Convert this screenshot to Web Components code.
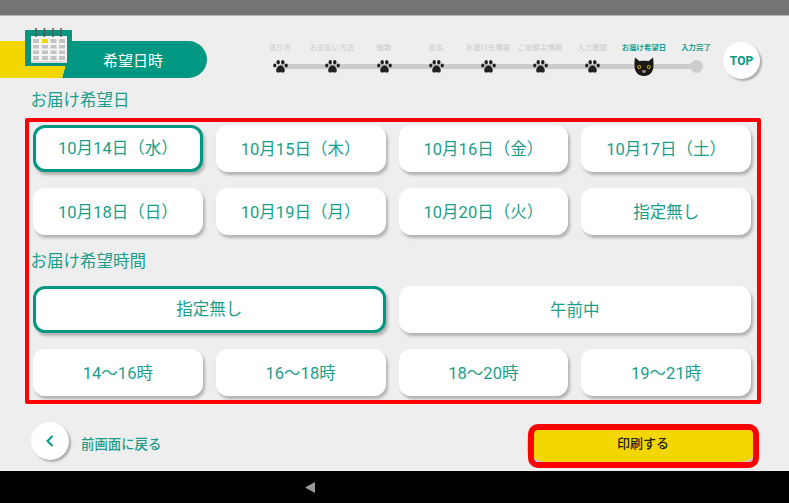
<!DOCTYPE html>
<html lang="ja">
<head>
<meta charset="utf-8">
<title>希望日時</title>
<style>
html, body { margin: 0; padding: 0; }
body {
	width: 789px;
	height: 503px;
	overflow: hidden;
	background: #eeeeee;
	font-family: Roboto, "Noto Sans CJK JP", sans-serif;
	color: #1a9e8b;
}
</style>
</head>
<body>
<app-screen>
	<page-head slot="head">
		<page-title>希望日時</page-title>
		<step-bar>
			<step-item pos="first">送り方</step-item>
			<step-item>お支払い方法</step-item>
			<step-item>個数</step-item>
			<step-item>品名</step-item>
			<step-item>お届け先情報</step-item>
			<step-item>ご依頼主情報</step-item>
			<step-item>入力確認</step-item>
			<step-item mark="cat">お届け希望日</step-item>
			<step-item mark="dot" pos="last">入力完了</step-item>
		</step-bar>
		<top-button>TOP</top-button>
	</page-head>
	<section-label slot="date-label">お届け希望日</section-label>
	<choice-frame slot="frame">
		<choice-grid>
			<choice-button selected>10月14日（水）</choice-button>
			<choice-button>10月15日（木）</choice-button>
			<choice-button>10月16日（金）</choice-button>
			<choice-button>10月17日（土）</choice-button>
			<choice-button>10月18日（日）</choice-button>
			<choice-button>10月19日（月）</choice-button>
			<choice-button>10月20日（火）</choice-button>
			<choice-button>指定無し</choice-button>
		</choice-grid>
		<section-label inner>お届け希望時間</section-label>
		<choice-grid>
			<choice-button wide selected>指定無し</choice-button>
			<choice-button wide>午前中</choice-button>
			<choice-button>14～16時</choice-button>
			<choice-button>16～18時</choice-button>
			<choice-button>18～20時</choice-button>
			<choice-button>19～21時</choice-button>
		</choice-grid>
	</choice-frame>
	<page-foot slot="foot">
		<back-link>前画面に戻る</back-link>
		<print-button>印刷する</print-button>
	</page-foot>
</app-screen>

<script>
const PAW = `<svg width="15" height="13" viewBox="0 0 15 13"><g fill="#222">
	<ellipse cx="1.8" cy="5.4" rx="1.6" ry="2"/>
	<ellipse cx="5.2" cy="2.2" rx="1.7" ry="2.2"/>
	<ellipse cx="9.8" cy="2.2" rx="1.7" ry="2.2"/>
	<ellipse cx="13.2" cy="5.4" rx="1.6" ry="2"/>
	<path d="M7.5 5.2C9.6 5.2 11.8 8 11.8 10.4C11.8 12.4 10 12.8 8.9 12.4C8 12.1 7 12.1 6.1 12.4C5 12.8 3.2 12.4 3.2 10.4C3.2 8 5.4 5.2 7.5 5.2Z"/>
</g></svg>`;

const CAT = `<svg width="20" height="19" viewBox="0 0 20 19">
	<path fill="#1b1712" d="M1 0.5L5.6 4.2C7.4 3.6 12.6 3.6 14.4 4.2L19 0.5C19.6 3.5 19.6 6.5 19.4 9C19.6 15 15.5 19 10 19C4.5 19 0.4 15 0.6 9C0.4 6.5 0.4 3.5 1 0.5Z"/>
	<circle cx="5.2" cy="10" r="2" fill="#b5a21c"/>
	<circle cx="14.8" cy="10" r="2" fill="#b5a21c"/>
	<circle cx="5.2" cy="10" r="0.9" fill="#1b1712"/>
	<circle cx="14.8" cy="10" r="0.9" fill="#1b1712"/>
	<path fill="#9c9c9c" d="M8 13.2h4l-0.6 2.6h-2.8z"/>
</svg>`;

// small base class, every element is just a shadow root with its markup
function define(name, html, setup) {
	const template = document.createElement('template');
	template.innerHTML = html;
	customElements.define(name, class extends HTMLElement {
		constructor() {
			super();
			this.attachShadow({ mode: 'open' }).appendChild(template.content.cloneNode(true));
		}
		connectedCallback() {
			if (setup) setup(this);
		}
	});
}

define('app-screen', `<style>
	:host { display: flex; flex-direction: column; height: 503px; }
	.status { height: 15px; background: #757575; border-bottom: 1px solid #b4b4b4; flex: none; }
	main { flex: 1; display: flex; flex-direction: column; }
	.nav { height: 32px; flex: none; background: #000; display: flex; align-items: center; justify-content: center; }
	.nav svg { margin-left: -169px; }
</style>
<div class="status"></div>
<main>
	<slot name="head"></slot>
	<slot name="date-label"></slot>
	<slot name="frame"></slot>
	<slot name="foot"></slot>
</main>
<div class="nav"><svg width="10" height="11" viewBox="0 0 10 11"><polygon points="10,0 10,11 0,5.5" fill="#9a9a9a"/></svg></div>`);

define('page-head', `<style>
	:host { display: flex; height: 63px; align-items: flex-start; }
</style><slot></slot>`);

define('page-title', `<style>
	:host {
		display: flex;
		position: relative;
		flex: none;
		box-sizing: border-box;
		width: 207px;
		height: 37px;
		margin-top: 25px;
		padding-left: 59px;
		padding-bottom: 1px;
		align-items: center;
		justify-content: center;
		color: #fff;
		font-size: 15px;
		border-radius: 0 19px 19px 0;
		background: linear-gradient(105deg, #f4d600 69.5px, #009882 70px);
	}
	svg { position: absolute; left: 25px; top: -13px; }
</style>
<svg width="47" height="39" viewBox="0 0 47 39">
	<rect x="0" y="2" width="47" height="36" rx="1" fill="#0a9480"/>
	<rect x="6" y="8" width="36" height="27" fill="#f4f4f4"/>
	<path d="M6 33h36v2H6z" fill="#d8d8d8"/>
	<g fill="#c4c4c4">
		<rect x="8" y="11" width="6" height="4"/><rect x="25.500" y="11" width="6" height="4"/><rect x="34" y="11" width="6" height="4"/>
		<rect x="8" y="17" width="6" height="3.500"/><rect x="17" y="17" width="6" height="3.500"/><rect x="25.500" y="17" width="6" height="3.500"/><rect x="34" y="17" width="6" height="3.500"/>
		<rect x="8" y="22.500" width="6" height="3.500"/><rect x="17" y="22.500" width="6" height="3.500"/><rect x="25.500" y="22.500" width="6" height="3.500"/><rect x="34" y="22.500" width="6" height="3.500"/>
		<rect x="8" y="28" width="6" height="4"/><rect x="17" y="28" width="6" height="4"/><rect x="25.500" y="28" width="6" height="4"/><rect x="34" y="28" width="6" height="4"/>
	</g>
	<rect x="17" y="11" width="6" height="4" fill="#f4d600"/>
	<g stroke="#555" stroke-width="1.500">
		<path d="M11 0v9M19.500 0v9M28 0v9M36 0v9"/>
	</g>
</svg>
<slot></slot>`);

define('step-bar', `<style>
	:host {
		display: grid;
		grid-template-columns: repeat(9, 52px);
		flex: none;
		margin-left: 47px;
		margin-top: 26px;
	}
</style><slot></slot>`);

define('step-item', `<style>
	:host {
		display: flex;
		flex-direction: column;
		align-items: center;
		height: 36px;
		font-size: 7.4px;
		color: #c9c9c9;
		background: linear-gradient(#cccccc, #cccccc) 0 22px / 100% 5px no-repeat;
	}
	:host([pos="first"]) { background-position: 100% 22px; background-size: 50% 5px; }
	:host([pos="last"]) { background-position: 0 22px; background-size: 50% 5px; }
	:host([mark]) { color: #1a9e8b; font-weight: 700; }
	.label { height: 12px; line-height: 12px; white-space: nowrap; }
	.mark { height: 24px; display: flex; align-items: center; justify-content: center; }
	.dot { width: 13px; height: 13px; border-radius: 50%; background: #cccccc; }
</style>
<div class="label"><slot></slot></div>
<div class="mark"></div>`, (el) => {
	const mark = el.getAttribute('mark');
	el.shadowRoot.querySelector('.mark').innerHTML =
		mark === 'cat' ? CAT : mark === 'dot' ? '<div class="dot"></div>' : PAW;
});

define('top-button', `<style>
	:host {
		display: flex;
		flex: none;
		width: 37px;
		height: 37px;
		margin-top: 26px;
		margin-left: 1px;
		align-items: center;
		justify-content: center;
		border-radius: 50%;
		background: #fff;
		box-shadow: 2px 2px 2px rgba(0, 0, 0, .28);
		color: #009882;
		font-size: 12px;
		font-weight: 700;
	}
</style><slot></slot>`);

define('section-label', `<style>
	:host {
		display: block;
		height: 24px;
		line-height: 24px;
		margin: 10px 0 5px 30.500px;
		font-size: 16.5px;
	}
	:host([inner]) { height: 50px; padding-top: 1px; line-height: 51px; margin: 0 0 0 -2.500px; }
</style><slot></slot>`);

define('choice-frame', `<style>
	:host {
		display: block;
		box-sizing: border-box;
		width: 736px;
		height: 286px;
		margin-left: 25px;
		padding: 3px 6px 4px 4px;
		border: 4px solid #ff0000;
		border-radius: 2px;
	}
</style><slot></slot>`);

define('choice-grid', `<style>
	:host {
		display: grid;
		grid-template-columns: repeat(4, 1fr);
		gap: 16px 13px;
	}
</style><slot></slot>`);

define('choice-button', `<style>
	:host {
		display: flex;
		box-sizing: border-box;
		height: 47px;
		padding-bottom: 2px;
		align-items: center;
		justify-content: center;
		border-radius: 12px;
		background: #fff;
		box-shadow: 2px 3px 3px rgba(0, 0, 0, .25);
		font-size: 16.5px;
		white-space: nowrap;
	}
	:host([wide]) { grid-column: span 2; }
	:host([selected]) { border: 3px solid #009882; padding-bottom: 3px; }
</style><slot></slot>`);

define('page-foot', `<style>
	:host {
		display: flex;
		box-sizing: border-box;
		height: 67px;
		justify-content: space-between;
		align-items: flex-start;
		padding: 18px 30px 0 31px;
	}
</style><slot></slot>`);

define('back-link', `<style>
	:host {
		display: flex;
		align-items: center;
		gap: 12px;
		font-size: 13.400px;
		font-weight: 500;
		color: #1a9e8b;
	}
	.circle {
		display: flex;
		width: 38px;
		height: 38px;
		align-items: center;
		justify-content: center;
		border-radius: 50%;
		background: #fff;
		box-shadow: 2px 2px 2px rgba(0, 0, 0, .28);
	}
	.text { padding-top: 3px; }
</style>
<div class="circle"><svg width="8" height="12" viewBox="0 0 8 12"><path d="M6.500 1L1.500 6L6.500 11" fill="none" stroke="#009882" stroke-width="2"/></svg></div>
<div class="text"><slot></slot></div>`);

define('print-button', `<style>
	:host {
		display: flex;
		position: relative;
		box-sizing: border-box;
		width: 232px;
		height: 38px;
		margin-top: 2px;
		padding-bottom: 2px;
		align-items: center;
		justify-content: center;
		border-radius: 19px;
		background: #f4d600;
		box-shadow: 0 6px 0 #c8c8cc;
		color: #222;
		font-size: 13px;
		font-weight: 500;
	}
	:host::after {
		content: "";
		position: absolute;
		left: 1px;
		top: 0;
		box-sizing: border-box;
		width: 231px;
		height: 44px;
		border: 6px solid #ff0000;
		border-radius: 10px;
	}
</style><slot></slot>`);
</script>
</body>
</html>
